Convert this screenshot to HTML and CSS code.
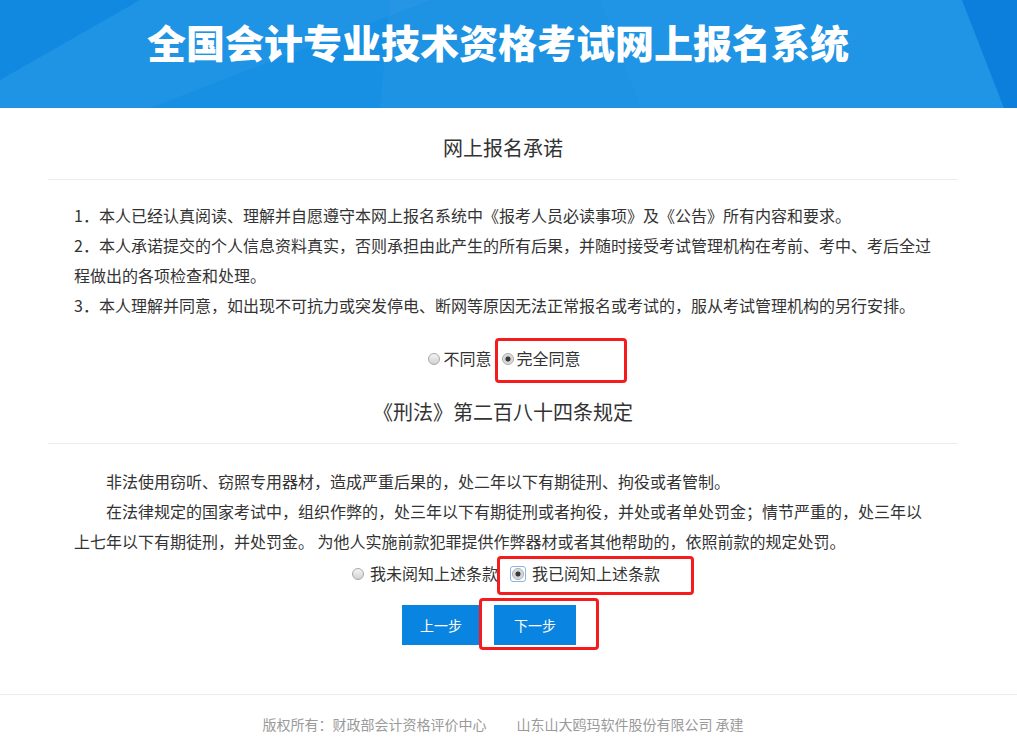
FILE: index.html
```html
<!DOCTYPE html>
<html lang="zh-CN">
<head>
<meta charset="utf-8">
<title>全国会计专业技术资格考试网上报名系统</title>
<link rel="stylesheet" href="styles.css">
</head>
<body>
<header class="banner">
  <svg class="banner-bg" viewBox="0 0 1017 108" preserveAspectRatio="none" aria-hidden="true">
    <rect x="0" y="0" width="1017" height="108" fill="#1790e4"/>
    <polygon points="0,0 140,0 0,80" fill="#0d86df" opacity="0.6"/>
    <polygon points="140,0 430,0 150,108 0,108 0,80" fill="#ffffff" opacity="0.035"/>
    <polygon points="390,0 600,0 640,108 380,108" fill="#ffffff" opacity="0.03"/>
    <polygon points="600,0 962,0 1004,108 640,108" fill="#ffffff" opacity="0.04"/>
    <polygon points="962,0 1017,0 1017,108 1004,108" fill="#0b7fdb"/>
  </svg>
  <h1 class="banner-title">全国会计专业技术资格考试网上报名系统</h1>
</header>

<main class="content">
  <section class="block">
    <h2 class="block-title">网上报名承诺</h2>
    <div class="block-body">
      <p class="para">1．本人已经认真阅读、理解并自愿遵守本网上报名系统中《报考人员必读事项》及《公告》所有内容和要求。</p>
      <p class="para">2．本人承诺提交的个人信息资料真实，否则承担由此产生的所有后果，并随时接受考试管理机构在考前、考中、考后全过程做出的各项检查和处理。</p>
      <p class="para">3．本人理解并同意，如出现不可抗力或突发停电、断网等原因无法正常报名或考试的，服从考试管理机构的另行安排。</p>
    </div>
    <div class="choice-row choice-row-first">
      <label class="choice"><input class="radio" type="radio" name="promise"><span>不同意</span></label>
      <label class="choice"><input class="radio" type="radio" name="promise" checked><span>完全同意</span></label>
    </div>
  </section>

  <section class="block">
    <h2 class="block-title block-title-second">《刑法》第二百八十四条规定</h2>
    <div class="block-body block-body-second">
      <p class="para para-indent">非法使用窃听、窃照专用器材，造成严重后果的，处二年以下有期徒刑、拘役或者管制。</p>
      <p class="para para-indent">在法律规定的国家考试中，组织作弊的，处三年以下有期徒刑或者拘役，并处或者单处罚金；情节严重的，处三年以上七年以下有期徒刑，并处罚金。 为他人实施前款犯罪提供作弊器材或者其他帮助的，依照前款的规定处罚。</p>
    </div>
    <div class="choice-row choice-row-second">
      <label class="choice choice-wide"><input class="radio" type="radio" name="law"><span>我未阅知上述条款</span></label>
      <label class="choice choice-wide"><span class="focus-ring"><input class="radio" type="radio" name="law" checked></span><span>我已阅知上述条款</span></label>
    </div>
    <div class="actions">
      <button class="btn btn-prev" type="button">上一步</button>
      <button class="btn btn-next" type="button">下一步</button>
    </div>
  </section>
</main>

<footer class="footer">
  <div class="footer-inner">
    <span>版权所有：财政部会计资格评价中心</span>
    <span>山东山大鸥玛软件股份有限公司 承建</span>
  </div>
</footer>

<div class="mark mark-agree"></div>
<div class="mark mark-read"></div>
<div class="mark mark-next"></div>
</body>
</html>
```

FILE: styles.css
```css
* {
  box-sizing: border-box;
}

html, body {
  margin: 0;
  padding: 0;
  background: #ffffff;
}

body {
  position: relative;
  min-height: 754px;
  font-family: "Noto Sans CJK SC", "Noto Sans", "Liberation Sans", sans-serif;
  color: #333333;
  overflow: hidden;
}

.banner {
  position: relative;
  height: 108px;
  overflow: hidden;
}

.banner-bg {
  position: absolute;
  left: 0;
  top: 0;
  width: 100%;
  height: 100%;
  display: block;
}

.banner-title {
  position: relative;
  margin: 0;
  text-align: center;
  color: #ffffff;
  font-size: 39px;
  font-weight: 900;
  letter-spacing: 0;
  line-height: 82px;
  padding-right: 21px;
}

.content {
  margin-left: 48px;
  width: 910px;
}

.block-title {
  margin: 0;
  padding: 25px 0 16px;
  line-height: 30px;
  font-size: 20px;
  font-weight: 400;
  text-align: center;
  color: #333333;
  border-bottom: 1px solid #ececec;
}

.block-title-second {
  padding-top: 24px;
}

.block-body {
  padding: 20px 0 0 26px;
  width: 886px;
}

.block-body-second {
  padding-top: 22px;
}

.para {
  margin: 0;
  width: 860px;
  font-size: 16px;
  line-height: 30px;
  color: #333333;
}

.para-indent {
  text-indent: 2em;
}

.choice-row {
  display: flex;
  justify-content: center;
  align-items: center;
  height: 30px;
  font-size: 16px;
  line-height: 30px;
}

.choice-row-first {
  margin-top: 23px;
  gap: 10px;
  padding-left: 3px;
}

.choice-row-second {
  margin-top: 2px;
  gap: 12px;
  padding-left: 6px;
}

.choice {
  display: flex;
  align-items: center;
  gap: 3px;
  cursor: pointer;
}

.choice-wide {
  gap: 6px;
}

.radio {
  -webkit-appearance: none;
  appearance: none;
  margin: 2px 0 0;
  width: 12px;
  height: 12px;
  border: 1px solid #a8a8a8;
  border-radius: 50%;
  background: linear-gradient(#f4f4f4, #d2d2d2);
  display: block;
}

.radio:checked {
  background: radial-gradient(circle, #3a3a3a 0, #3a3a3a 2.2px, #c8c8c8 2.8px, #e6e6e6 5px);
}

.focus-ring {
  display: flex;
  padding: 1px;
  border: 1px solid #86b4ea;
  border-radius: 3px;
  margin-top: 2px;
}

.focus-ring .radio {
  margin: 0;
}

.actions {
  display: flex;
  justify-content: center;
  gap: 14px;
  margin-top: 17px;
  padding-right: 28px;
}

.btn {
  height: 40px;
  border: none;
  background: #0984e0;
  color: #ffffff;
  font-family: inherit;
  font-size: 14px;
  padding: 0;
  cursor: pointer;
}

.btn-prev {
  width: 78px;
}

.btn-next {
  width: 82px;
}

.footer {
  margin-top: 49px;
  border-top: 1px solid #ececec;
}

.footer-inner {
  margin-left: 48px;
  width: 910px;
  display: flex;
  justify-content: center;
  gap: 30px;
  padding-top: 19px;
  font-size: 14px;
  line-height: 20px;
  color: #9a9a9a;
}

.mark {
  position: absolute;
  border: 3px solid #f41c1c;
  border-radius: 4px;
  pointer-events: none;
}

.mark-agree {
  left: 495px;
  top: 338px;
  width: 132px;
  height: 45px;
}

.mark-read {
  left: 497px;
  top: 556px;
  width: 197px;
  height: 39px;
}

.mark-next {
  left: 479px;
  top: 598px;
  width: 120px;
  height: 52px;
}
```
